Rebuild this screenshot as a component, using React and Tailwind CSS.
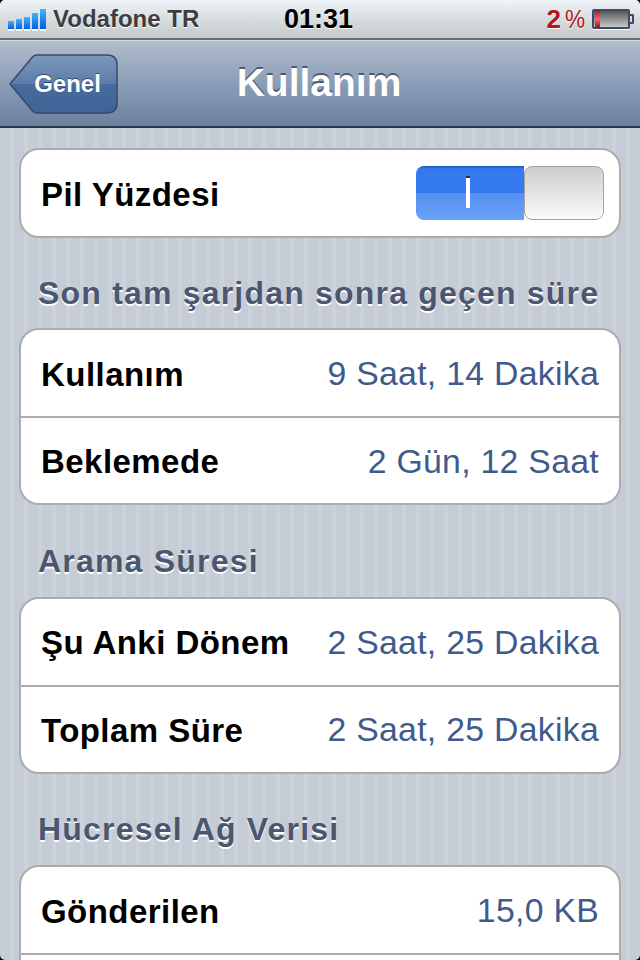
const font = { fontFamily: '"Liberation Sans", Arial, sans-serif' };

const groups = [
  {
    title: 'Son tam şarjdan sonra geçen süre',
    rows: [
      ['Kullanım', '9 Saat, 14 Dakika'],
      ['Beklemede', '2 Gün, 12 Saat'],
    ],
  },
  {
    title: 'Arama Süresi',
    rows: [
      ['Şu Anki Dönem', '2 Saat, 25 Dakika'],
      ['Toplam Süre', '2 Saat, 25 Dakika'],
    ],
  },
  {
    title: 'Hücresel Ağ Verisi',
    rows: [
      ['Gönderilen', '15,0 KB'],
      ['', ''],
    ],
  },
];

function SignalBars() {
  const heights = ['h-[8px]', 'h-[10px]', 'h-[12px]', 'h-[16px]', 'h-[20px]'];
  return (
    <div className="flex h-[20px] items-end gap-[2px]">
      {heights.map((h) => (
        <div
          key={h}
          className={`${h} w-[6px] bg-gradient-to-b from-[#43b4fb] to-[#0a5ce0] shadow-[0_2px_0_#ffffff]`}
        />
      ))}
    </div>
  );
}

function Battery() {
  return (
    <div className="flex items-center">
      <div className="flex h-[20px] w-[38px] rounded-[2px] border-2 border-[#3f4a62] bg-gradient-to-b from-[#585858] to-[#cacaca] shadow-[0_1px_0_#ffffff]">
        <div className="ml-px w-[5px] bg-gradient-to-b from-[#b3101c] via-[#ff5f6a] to-[#a80f1a]" />
      </div>
      <div className="h-[10px] w-[4px] rounded-r-[2px] border-2 border-l-0 border-[#3f4a62]" />
    </div>
  );
}

function StatusBar() {
  return (
    <div className="flex h-[40px] items-center border-b-2 border-[#696d74] bg-gradient-to-b from-[#eef4f7] to-[#c3c8ca] pl-[8px] pr-[6px]">
      <SignalBars />
      <span className="ml-[7px] w-[231px] text-[24px] font-bold leading-none text-[#3d3d3f] [text-shadow:0_1px_0_#ffffff]">
        Vodafone TR
      </span>
      <span className="w-[68px] text-[27px] font-bold leading-none text-black [text-shadow:0_1px_0_#ffffff]">
        01:31
      </span>
      <span className="ml-auto mr-[7px] flex items-end gap-[4px] text-[26px] leading-none text-[#b5161c] [text-shadow:0_1px_0_#ffffff]">
        <span className="font-bold">2</span>
        <span className="w-[20px] origin-left scale-x-[0.87]">%</span>
      </span>
      <Battery />
    </div>
  );
}

function BackButton() {
  return (
    <button type="button" className="relative h-[60px] w-[110px] text-white">
      <svg className="absolute inset-0" width="110" height="60" viewBox="0 0 110 60">
        <defs>
          <linearGradient id="back" x1="0" y1="0" x2="0" y2="1">
            <stop offset="0" stopColor="#7f98ba" />
            <stop offset="0.5" stopColor="#5b7ca8" />
            <stop offset="0.5" stopColor="#476b9c" />
            <stop offset="1" stopColor="#3f6497" />
          </linearGradient>
        </defs>
        <path
          d="M1 30 L23.5 3 Q25.5 1 28 1 L98 1 Q108 1 108 11 L108 49 Q108 59 98 59 L28 59 Q25.5 59 23.5 57 Z"
          fill="url(#back)"
          stroke="#34496c"
          strokeWidth="1.5"
        />
      </svg>
      <span className="relative block pl-[7px] text-[24px] font-bold leading-none [text-shadow:0_-1px_0_#33486a]">
        Genel
      </span>
    </button>
  );
}

function NavBar() {
  return (
    <div className="relative flex h-[88px] items-center justify-center border-b-2 border-t border-b-[#2c394d] border-t-[#d3dae3] bg-gradient-to-b from-[#b2bdcc] via-[#8b9db7] to-[#6b81a0] pb-[2px] pr-[2px]">
      <div className="absolute left-[9px] top-[13px]">
        <BackButton />
      </div>
      <h1 className="text-[39px] font-bold leading-none text-white [text-shadow:0_-2px_0_#4d5a70]">
        Kullanım
      </h1>
    </div>
  );
}

function Toggle() {
  return (
    <div className="flex h-[54px] w-[188px] overflow-hidden rounded-[8px]">
      <div className="flex w-[108px] items-center justify-center bg-[linear-gradient(#1c55b4_0,#3479f0_3px,#3479f0_50%,#5490f2_50%,#6ba2f5_100%)] pr-[4px]">
        <div className="h-[30px] w-[4px] bg-white shadow-[0_-2px_0_#1c2f55]" />
      </div>
      <div className="flex-1 rounded-[8px] border border-[#a3a3a3] bg-gradient-to-b from-[#cdcdcd] to-[#fbfbfb]" />
    </div>
  );
}

function Group({ children }) {
  return (
    <div className="rounded-[20px] border-2 border-[#aaacae] bg-white">{children}</div>
  );
}

function Row({ label, value, last }) {
  return (
    <div
      className={`flex items-center justify-between pl-[20px] pr-[20px] pt-[2px] ${
        last ? 'h-[85px]' : 'h-[88px] border-b-2 border-[#aaacae]'
      }`}
    >
      <span className="text-[33px] font-bold leading-none tracking-[0.45px] text-black">{label}</span>
      <span className="text-[33.75px] leading-none tracking-[0.3px] text-[#3f5a8c]">{value}</span>
    </div>
  );
}

export default function App() {
  return (
    <div className="h-[960px] w-[640px] overflow-hidden bg-black" style={font}>
      <div className="h-full overflow-hidden rounded-[5px] bg-[repeating-linear-gradient(90deg,#c5ccd5_0,#c5ccd5_10px,#cbd2da_10px,#cbd2da_14px)]">
        <StatusBar />
        <NavBar />
        <div className="px-[19px] pt-[20px]">
          <Group>
            <div className="flex h-[86px] items-center justify-between pl-[20px] pr-[15px]">
              <span className="pt-[2px] text-[33px] font-bold leading-none tracking-[0.45px] text-black">Pil Yüzdesi</span>
              <Toggle />
            </div>
          </Group>
          {groups.map((group, index) => (
            <section key={group.title}>
              <h2
                className={`flex items-center pl-[19px] pt-[20px] text-[32px] font-bold leading-none tracking-[1.2px] text-[#4c566e] [text-shadow:0_2px_0_#ffffff] ${
                  index === 0 ? 'h-[90px]' : 'h-[91.5px]'
                }`}
              >
                {group.title}
              </h2>
              <Group>
                {group.rows.map(([label, value], i) => (
                  <Row key={label} label={label} value={value} last={i === group.rows.length - 1} />
                ))}
              </Group>
            </section>
          ))}
        </div>
      </div>
    </div>
  );
}
